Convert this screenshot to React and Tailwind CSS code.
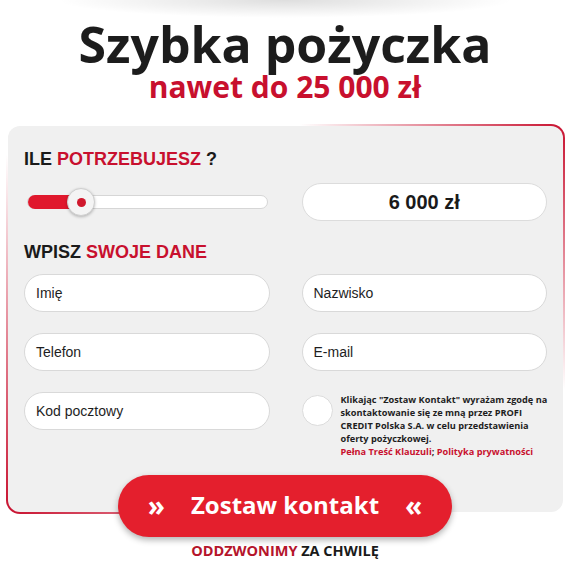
export default function App() {
  const fields = ['Imię', 'Nazwisko', 'Telefon', 'E-mail'];

  return (
    <div className="w-[570px] min-h-[562px] bg-white overflow-hidden">
      {/* cień u góry */}
      <div className="h-[18px] mx-auto w-[460px] bg-[radial-gradient(ellipse_at_top,rgba(0,0,0,0.13),transparent_70%)]" />

      <div className="text-center font-['Open_Sans',sans-serif] font-bold">
        <h1 className="text-[50px] leading-[50px] text-[#1c1c1c] mt-[1px]">Szybka pożyczka</h1>
        <p className="text-[30px] leading-[32px] text-[#c8102e] mt-[2px]">nawet do 25 000 zł</p>
      </div>

      <div className="ml-[6px] mt-[21px] w-[559px] rounded-[14px] p-[2px] bg-[linear-gradient(225deg,#c8102e_0%,rgba(200,16,46,0)_28%,rgba(200,16,46,0)_62%,#c8102e_100%)]">
        <div className="rounded-[12px] bg-[#f0f0f0] px-[16px] pt-[23px] pb-[54px] font-['Liberation_Sans',Arial,sans-serif]">
          <h2 className="text-[18px] leading-[20px] font-bold text-[#1a1a1a]">
            ILE <span className="text-[#c8102e]">POTRZEBUJESZ</span> ?
          </h2>

          <div className="mt-[14px] grid grid-cols-2 gap-x-[32px] items-center">
            <div className="relative h-[38px] flex items-center pl-[3px] pr-[2px]">
              <div className="relative w-full h-[14px] rounded-full bg-white border border-[#d6d6d6]">
                <div className="absolute left-0 top-[-1px] h-[14px] w-[56px] rounded-full bg-[#e0182d]" />
              </div>
              <div className="absolute left-[43px] top-[5px] w-[28px] h-[28px] rounded-full bg-[#f4f4f4] border border-[#cfcfcf] shadow-[0_1px_3px_rgba(0,0,0,0.25)] flex items-center justify-center">
                <div className="w-[9px] h-[9px] rounded-full bg-[#d0182d]" />
              </div>
            </div>
            <div className="h-[38px] rounded-full bg-white border border-[#dcdcdc] flex items-center justify-center text-[20px] font-bold text-[#1a1a1a]">
              6 000 zł
            </div>
          </div>

          <h2 className="mt-[21px] text-[18px] leading-[20px] font-bold text-[#1a1a1a]">
            WPISZ <span className="text-[#c8102e]">SWOJE DANE</span>
          </h2>

          <div className="mt-[12px] grid grid-cols-2 gap-x-[32px] gap-y-[21px]">
            {fields.map((f) => (
              <div
                key={f}
                className="h-[38px] rounded-full bg-white border border-[#d9d9d9] flex items-center pl-[11px] text-[14px] text-[#1e1e1e]"
              >
                {f}
              </div>
            ))}
            <div className="h-[38px] rounded-full bg-white border border-[#d9d9d9] flex items-center pl-[11px] text-[14px] text-[#1e1e1e]">
              Kod pocztowy
            </div>
            <div className="flex items-start gap-[8px]">
              <div className="mt-[3px] w-[31px] h-[31px] shrink-0 rounded-full bg-white border border-[#dcdcdc]" />
              <div className="font-['Open_Sans',sans-serif] font-bold text-[9.2px] leading-[13px] text-[#1e1e1e] pt-[1px] whitespace-nowrap">
                <p>
                  Klikając "Zostaw Kontakt" wyrażam zgodę na<br />
                  skontaktowanie się ze mną przez PROFI<br />
                  CREDIT Polska S.A. w celu przedstawienia<br />
                  oferty pożyczkowej.
                </p>
                <p className="text-[#c8102e]">
                  Pełna Treść Klauzuli<span className="text-[#1e1e1e]">;</span> Polityka prywatności
                </p>
              </div>
            </div>
          </div>
        </div>
      </div>

      <div className="-mt-[39px] flex justify-center">
        <button className="w-[334px] h-[62px] rounded-full bg-[#e41f2d] shadow-[0_3px_6px_rgba(0,0,0,0.3)] flex items-center justify-center gap-[26px] text-white font-['Open_Sans',sans-serif] font-bold">
          <span className="text-[28px] leading-none -mt-[3px]">»</span>
          <span className="text-[24px] leading-none -mt-[3px]">Zostaw kontakt</span>
          <span className="text-[28px] leading-none -mt-[3px]">«</span>
        </button>
      </div>

      <p className="mt-[5px] text-center font-['Open_Sans',sans-serif] font-bold text-[14.5px] leading-[18px] text-[#1a1a1a]">
        <span className="text-[#b5142b]">ODDZWONIMY</span> ZA CHWILĘ
      </p>
    </div>
  );
}
